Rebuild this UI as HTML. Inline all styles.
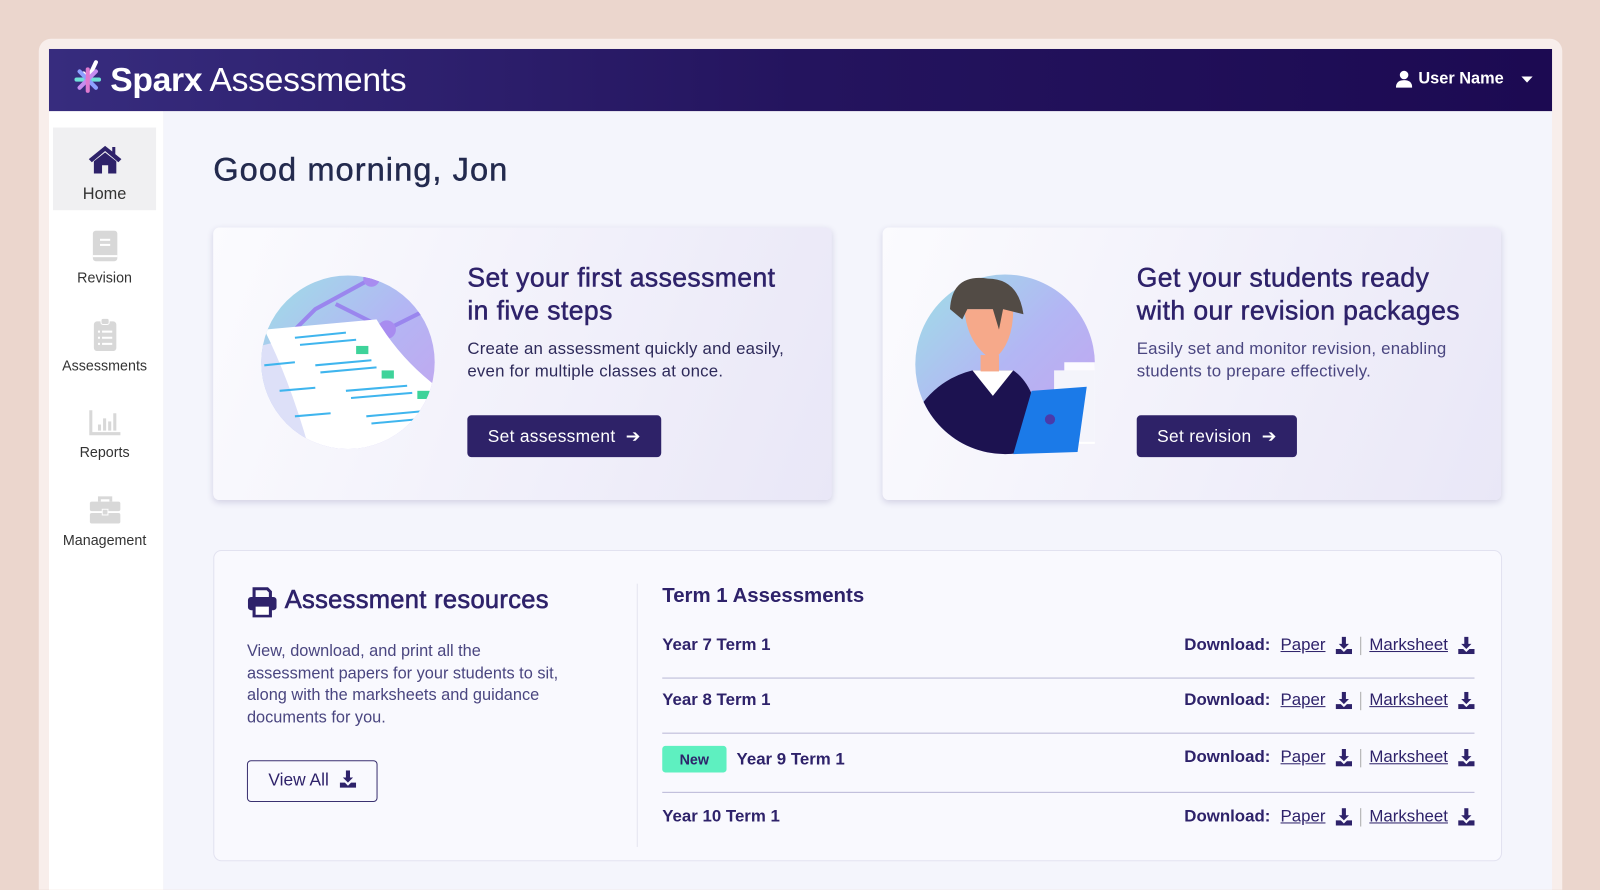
<!DOCTYPE html>
<html><head><meta charset="utf-8"><style>
*{box-sizing:border-box;margin:0;padding:0}
body{width:1600px;height:889px;overflow:hidden;background:#ebd6cd;font-family:"Liberation Sans",sans-serif;position:relative}
#w{position:absolute;left:0;top:0;width:1568px;height:872px;transform:scale(1.020408);transform-origin:0 0;overflow:hidden}
.outer{position:absolute;left:38px;top:38px;width:1493px;height:860px;background:#f8eeeb;border-radius:12px}
.header{position:absolute;left:48px;top:48px;width:1473px;height:61px;background:linear-gradient(90deg,#372c7e,#24145e 50%,#1c0a52)}
.logo{position:absolute;left:108px;top:59px;color:#fff;font-size:33px;letter-spacing:-0.3px}
.logo b{font-weight:bold}
.user{position:absolute;left:1390px;top:69px;color:#fff;font-weight:bold;font-size:16px}
.side{position:absolute;left:48px;top:109px;width:112px;height:780px;background:#fff}
.main{position:absolute;left:160px;top:109px;width:1361px;height:780px;background:#f4f5fc}
.nav{position:absolute;left:52px;width:101px;text-align:center;color:#333;font-size:14px}
.nav.home{top:125px;height:81px;background:#f0f0f2;font-size:16px}
h1{position:absolute;left:209px;top:148px;font-size:32px;color:#232a4e;font-weight:normal;letter-spacing:1px;-webkit-text-stroke:0.4px #232a4e}
.card{position:absolute;top:223px;width:606px;height:267px;border-radius:6px;background:linear-gradient(110deg,#fbfbfe,#e9e7f7);box-shadow:0 2px 6px rgba(60,50,120,.18)}
.card h2{position:absolute;left:249px;top:33px;font-size:26px;line-height:32px;color:#2e226a;font-weight:normal;letter-spacing:0.4px;-webkit-text-stroke:0.5px #2e226a;white-space:nowrap}
.card p{position:absolute;left:249px;top:108px;font-size:16.5px;line-height:22px;color:#2e2a5a;letter-spacing:0.2px;white-space:nowrap}
.btn{position:absolute;left:249px;top:184px;height:41px;background:#2e2268;color:#fff;border-radius:4px;font-size:17px;line-height:41px;padding:0 20px;letter-spacing:0.3px}
.res{position:absolute;left:209px;top:539px;width:1263px;height:305px;background:#f9f9fe;border:1px solid #e2e2f0;border-radius:8px}
.res h3{position:absolute;left:69px;top:34px;font-size:25px;color:#2e226a;font-weight:normal;letter-spacing:0.3px;-webkit-text-stroke:0.6px #2e226a}
.res p{position:absolute;left:32px;top:88px;font-size:16px;line-height:21.5px;color:#4a4680;white-space:nowrap}
.va{position:absolute;left:32px;top:205px;width:128px;height:41px;border:1.5px solid #3a3170;border-radius:4px;font-size:17px;line-height:38px;padding-left:20px;color:#2e226a}
.vline{position:absolute;left:414px;top:32px;width:1px;height:258px;background:#e4e4ef}
.t1{position:absolute;left:439px;top:33px;font-size:20px;font-weight:bold;color:#2e226a}
.row{position:absolute;left:439px;width:796px;height:55px;border-bottom:1.5px solid #b9b7d6;font-size:16.5px;color:#2e226a;font-weight:bold}
.row .n{position:absolute;left:0;top:13px}
.row .d{position:absolute;right:0;top:13px;display:flex;align-items:center}
.row .d u{font-weight:normal;margin:0 10px}
.sep{width:1px;height:18px;background:#aaa;margin:0 8px}
.new{display:inline-block;background:#5ef0c0;padding:2px 17px;border-radius:3px;font-size:14px;margin-right:10px;line-height:22px}
</style></head><body><div id="w">
<div class="outer"></div>
<div class="header"></div>
<svg style="position:absolute;left:72px;top:58px" width="30" height="36" viewBox="0 0 30 36"><path d="M10 14 L14 20 L22 3" stroke="#fff" stroke-width="4" fill="none" stroke-linecap="round"/><g stroke-width="4" stroke-linecap="round"><line x1="3" y1="20" x2="25" y2="20" stroke="#6fe0d6"/><line x1="6" y1="12" x2="22" y2="28" stroke="#8ea0ff"/><line x1="6" y1="28" x2="22" y2="12" stroke="#c68cf0"/><line x1="14" y1="10" x2="14" y2="31" stroke="#e07ad0"/></g></svg>
<div class="logo"><b>Sparx</b> Assessments</div>
<svg style="position:absolute;left:1368px;top:69px" width="16" height="17" viewBox="0 0 16 17"><circle cx="8" cy="4.5" r="4.2" fill="#fff"/><path d="M0 17 Q0 9.5 8 9.5 Q16 9.5 16 17Z" fill="#fff"/></svg>
<div class="user">User Name</div>
<svg style="position:absolute;left:1491px;top:75px" width="11" height="7"><path d="M0 0H11L5.5 6Z" fill="#fff"/></svg>
<div class="side"></div><div class="main"></div>
<div class="nav home"><svg style="margin-top:16px" width="36" height="30" viewBox="0 0 36 30"><path d="M18 2 L2 15 L5 18 L18 7 L31 18 L34 15 L28 10 V3 H25 V7.5Z" fill="#2e226a"/><path d="M7 17 L18 8.5 L29 17 V29 H21 V21 H15 V29 H7Z" fill="#2e226a"/></svg><div style="margin-top:6px">Home</div></div>
<div class="nav" style="top:226px"><svg width="28" height="32" viewBox="0 0 28 32"><rect x="2" y="0" width="24" height="30" rx="3" fill="#d8d8d8"/><rect x="9" y="8" width="10" height="2" fill="#fff"/><rect x="9" y="13" width="10" height="2" fill="#fff"/><rect x="2" y="24" width="24" height="2" fill="#fff"/></svg><div style="margin-top:3px">Revision</div></div>
<div class="nav" style="top:312px"><svg width="28" height="32" viewBox="0 0 28 32"><rect x="3" y="3" width="22" height="29" rx="3" fill="#d8d8d8"/><rect x="10" y="0" width="8" height="6" rx="2" fill="#d8d8d8" stroke="#fff" stroke-width="1"/><g fill="#fff"><rect x="7" y="12" width="2" height="2"/><rect x="11" y="12" width="10" height="2"/><rect x="7" y="18" width="2" height="2"/><rect x="11" y="18" width="10" height="2"/><rect x="7" y="24" width="2" height="2"/><rect x="11" y="24" width="10" height="2"/></g></svg><div style="margin-top:3px">Assessments</div></div>
<div class="nav" style="top:400px"><svg width="32" height="28" viewBox="0 0 32 28"><path d="M2 2V25H31" stroke="#d8d8d8" stroke-width="3" fill="none"/><g fill="#d8d8d8"><rect x="9" y="16" width="3" height="6"/><rect x="14" y="10" width="3" height="12"/><rect x="19" y="13" width="3" height="9"/><rect x="24" y="5" width="3" height="17"/></g></svg><div style="margin-top:4px">Reports</div></div>
<div class="nav" style="top:486px"><svg width="34" height="28" viewBox="0 0 34 30"><path d="M11 6V2H23V6" stroke="#d8d8d8" stroke-width="3" fill="none"/><rect x="1" y="6" width="32" height="10" rx="2" fill="#d8d8d8"/><rect x="1" y="18" width="32" height="11" rx="2" fill="#d8d8d8"/><rect x="14" y="14" width="6" height="6" fill="#d8d8d8" stroke="#fff"/></svg><div style="margin-top:4px">Management</div></div>
<h1>Good morning, Jon</h1>
<div class="card" style="left:209px">
<svg style="position:absolute;left:40px;top:40px" width="190" height="190" viewBox="0 0 190 190"><defs><linearGradient id="g1" x1="0" y1="0" x2="1" y2="1"><stop offset="0" stop-color="#9ee0e6"/><stop offset=".5" stop-color="#b3b6f4"/><stop offset="1" stop-color="#c6a2ee"/></linearGradient><clipPath id="c1"><circle cx="92" cy="92" r="85"/></clipPath></defs><circle cx="92" cy="92" r="85" fill="url(#g1)"/><g clip-path="url(#c1)"><path d="M40 60L60 40L115 10M80 35L130 60L190 30" stroke="#9a86ee" stroke-width="4" fill="none"/><circle cx="115" cy="10" r="8" fill="#a88cf0"/><circle cx="130" cy="60" r="9" fill="#a88cf0"/><path d="M-10 80 L70 60 Q120 110 180 150 L150 200 L20 200Z" fill="#dde0f8"/><path d="M10 60 L120 50 Q150 100 200 130 L150 200 L60 200 Q40 120 10 60Z" fill="#fff"/><g stroke="#3fb5ee" stroke-width="2"><line x1="40" y1="68" x2="90" y2="63"/><line x1="45" y1="75" x2="100" y2="70"/><line x1="60" y1="95" x2="115" y2="90"/><line x1="65" y1="102" x2="120" y2="97"/><line x1="90" y1="120" x2="150" y2="115"/><line x1="95" y1="127" x2="155" y2="122"/><line x1="110" y1="145" x2="165" y2="140"/><line x1="115" y1="152" x2="170" y2="147"/><line x1="10" y1="95" x2="40" y2="92"/><line x1="25" y1="120" x2="60" y2="117"/><line x1="40" y1="145" x2="75" y2="142"/></g><g fill="#3ed39a"><rect x="100" y="76" width="12" height="8"/><rect x="125" y="100" width="12" height="8"/><rect x="160" y="120" width="12" height="8"/></g></g></svg>
<h2>Set your first assessment<br>in five steps</h2>
<p>Create an assessment quickly and easily,<br>even for multiple classes at once.</p>
<div class="btn">Set assessment &nbsp;➔</div></div>
<div class="card" style="left:865px">
<svg style="position:absolute;left:28px;top:40px" width="190" height="190" viewBox="0 0 190 190"><defs><linearGradient id="g2" x1="0" y1="0" x2="1" y2="1"><stop offset="0" stop-color="#9ee0e6"/><stop offset=".5" stop-color="#b3b6f4"/><stop offset="1" stop-color="#c6a2ee"/></linearGradient><clipPath id="c2"><circle cx="92" cy="94" r="88"/></clipPath></defs><circle cx="92" cy="94" r="88" fill="url(#g2)"/><g clip-path="url(#c2)"><path d="M0 150 Q20 110 60 100 L100 100 Q130 120 130 200 L0 200Z" fill="#1c1250"/><path d="M60 100 L80 125 L100 100Z" fill="#fff"/></g><path d="M150 92h30v80h-30z" fill="#fff" opacity=".95"/><path d="M140 100h40v70h-40z" fill="#f4f4fb"/><path d="M118 120 L172 116 L163 180 L100 182Z" fill="#1b7ae8"/><circle cx="136" cy="148" r="5" fill="#4a3aaa"/><path d="M52 40 Q55 75 80 90 Q100 75 100 40Z" fill="#f6a98a"/><rect x="68" y="85" width="18" height="16" fill="#f6a98a"/><path d="M38 40 Q40 5 75 10 Q105 10 110 45 L90 40 L86 60 L80 40 L55 40 L50 50Z" fill="#524b45"/></svg>
<h2>Get your students ready<br>with our revision packages</h2>
<p style="color:#4a4680">Easily set and monitor revision, enabling<br>students to prepare effectively.</p>
<div class="btn">Set revision &nbsp;➔</div></div>
<div class="res">
<svg style="position:absolute;left:32px;top:35px" width="30" height="30" viewBox="0 0 30 30"><path d="M7 10V2H20L23 5V10" stroke="#2e226a" stroke-width="3" fill="none"/><rect x="1" y="10" width="28" height="13" rx="3" fill="#2e226a"/><rect x="7" y="18" width="16" height="11" fill="#fff" stroke="#2e226a" stroke-width="3"/></svg>
<h3>Assessment resources</h3>
<p>View, download, and print all the<br>assessment papers for your students to sit,<br>along with the marksheets and guidance<br>documents for you.</p>
<div class="va">View All <svg width="16" height="17" viewBox="0 0 16 17" style="vertical-align:-2px;margin-left:6px"><path d="M6 0h4v7h3l-5 5-5-5h3z" fill="#2e226a"/><path d="M0 12h5l3 3 3-3h5v5H0z" fill="#2e226a"/></svg></div>
<div class="vline"></div>
<div class="t1">Term 1 Assessments</div>
<div class="row" style="top:70px"><span class="n">Year 7 Term 1</span><span class="d">Download: <u>Paper</u><svg width="16" height="17" viewBox="0 0 16 17"><path d="M6 0h4v7h3l-5 5-5-5h3z" fill="#2e226a"/><path d="M0 12h5l3 3 3-3h5v5H0z" fill="#2e226a"/></svg><span class="sep"></span><u style="margin-left:0">Marksheet</u><svg width="16" height="17" viewBox="0 0 16 17"><path d="M6 0h4v7h3l-5 5-5-5h3z" fill="#2e226a"/><path d="M0 12h5l3 3 3-3h5v5H0z" fill="#2e226a"/></svg></span></div>
<div class="row" style="top:124px"><span class="n">Year 8 Term 1</span><span class="d">Download: <u>Paper</u><svg width="16" height="17" viewBox="0 0 16 17"><path d="M6 0h4v7h3l-5 5-5-5h3z" fill="#2e226a"/><path d="M0 12h5l3 3 3-3h5v5H0z" fill="#2e226a"/></svg><span class="sep"></span><u style="margin-left:0">Marksheet</u><svg width="16" height="17" viewBox="0 0 16 17"><path d="M6 0h4v7h3l-5 5-5-5h3z" fill="#2e226a"/><path d="M0 12h5l3 3 3-3h5v5H0z" fill="#2e226a"/></svg></span></div>
<div class="row" style="top:178px;height:59px"><span class="n" style="top:13px"><span class="new">New</span>Year 9 Term 1</span><span class="d" style="top:15px">Download: <u>Paper</u><svg width="16" height="17" viewBox="0 0 16 17"><path d="M6 0h4v7h3l-5 5-5-5h3z" fill="#2e226a"/><path d="M0 12h5l3 3 3-3h5v5H0z" fill="#2e226a"/></svg><span class="sep"></span><u style="margin-left:0">Marksheet</u><svg width="16" height="17" viewBox="0 0 16 17"><path d="M6 0h4v7h3l-5 5-5-5h3z" fill="#2e226a"/><path d="M0 12h5l3 3 3-3h5v5H0z" fill="#2e226a"/></svg></span></div>
<div class="row" style="top:237px;border:0"><span class="n" style="top:14px">Year 10 Term 1</span><span class="d" style="top:14px">Download: <u>Paper</u><svg width="16" height="17" viewBox="0 0 16 17"><path d="M6 0h4v7h3l-5 5-5-5h3z" fill="#2e226a"/><path d="M0 12h5l3 3 3-3h5v5H0z" fill="#2e226a"/></svg><span class="sep"></span><u style="margin-left:0">Marksheet</u><svg width="16" height="17" viewBox="0 0 16 17"><path d="M6 0h4v7h3l-5 5-5-5h3z" fill="#2e226a"/><path d="M0 12h5l3 3 3-3h5v5H0z" fill="#2e226a"/></svg></span></div>
</div>
</div></body></html>
